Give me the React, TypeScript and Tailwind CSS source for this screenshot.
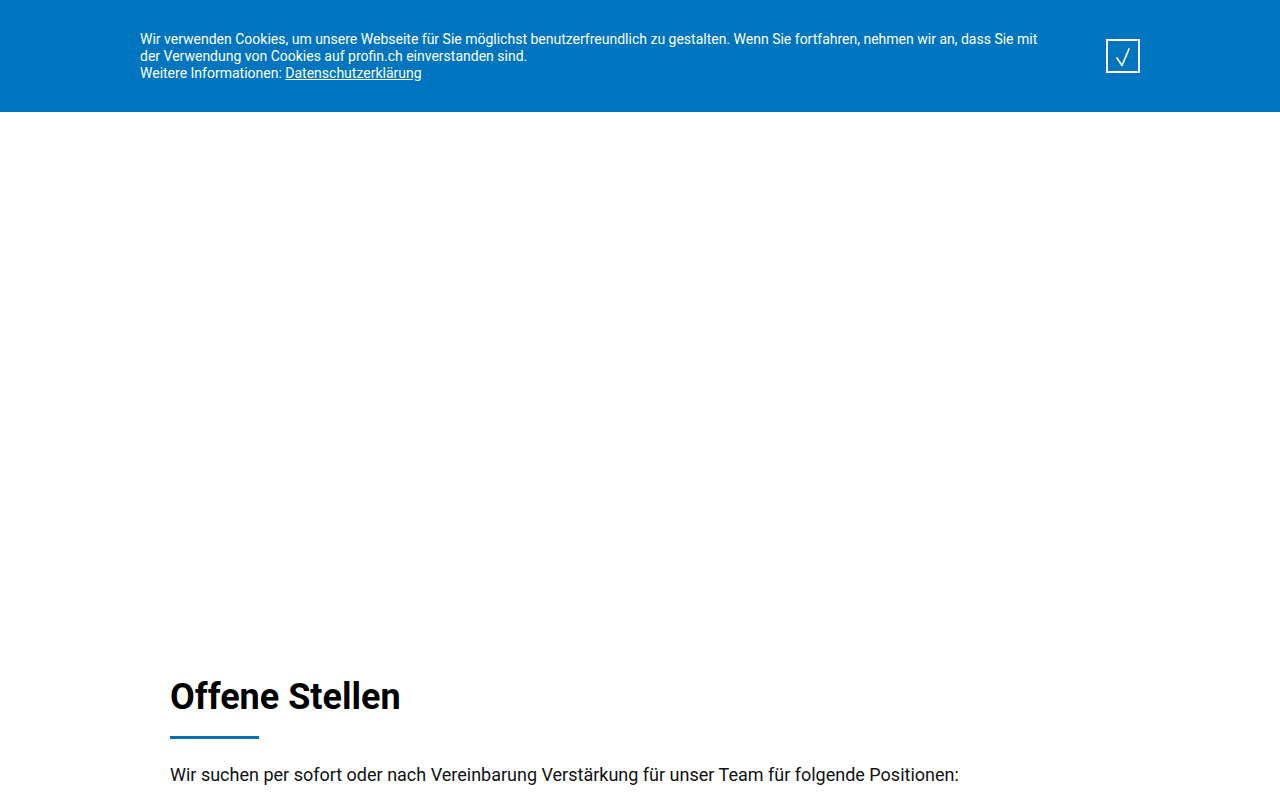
export default function App() {
  return (
    <div className="min-h-screen bg-white font-['Roboto',sans-serif]">
      {/* cookie notice */}
      <div className="h-[112px] bg-[#0075bf] text-white">
        <div className="mx-auto flex w-[1000px] items-start justify-between pt-[31px]">
          <p className="w-[910px] text-[14px] leading-[17px]">
            Wir verwenden Cookies, um unsere Webseite für Sie möglichst benutzerfreundlich zu gestalten. Wenn Sie fortfahren, nehmen wir an, dass Sie mit der Verwendung von Cookies auf profin.ch einverstanden sind.
            <br />
            Weitere Informationen:{" "}
            <a href="#" className="underline">
              Datenschutzerklärung
            </a>
          </p>
          <button className="mt-[8px] flex h-[34px] w-[34px] items-center justify-center border-2 border-white">
            <svg width="30" height="30" viewBox="0 0 30 30" fill="none">
              <polyline points="9,17 14,24.5 21,8" stroke="white" strokeWidth="1.7" strokeLinecap="round" strokeLinejoin="round" />
            </svg>
          </button>
        </div>
      </div>

      <div className="h-[563px]" />

      <div className="mx-auto w-[940px]">
        <h2 className="text-[36px] font-bold leading-[44px] text-black">Offene Stellen</h2>
        <div className="mt-[17px] h-[3px] w-[89px] bg-[#0a6fb0]" />
        <p className="mt-[23px] text-[18px] leading-[26px] text-[#111]">
          Wir suchen per sofort oder nach Vereinbarung Verstärkung für unser Team für folgende Positionen:
        </p>
      </div>
    </div>
  );
}
